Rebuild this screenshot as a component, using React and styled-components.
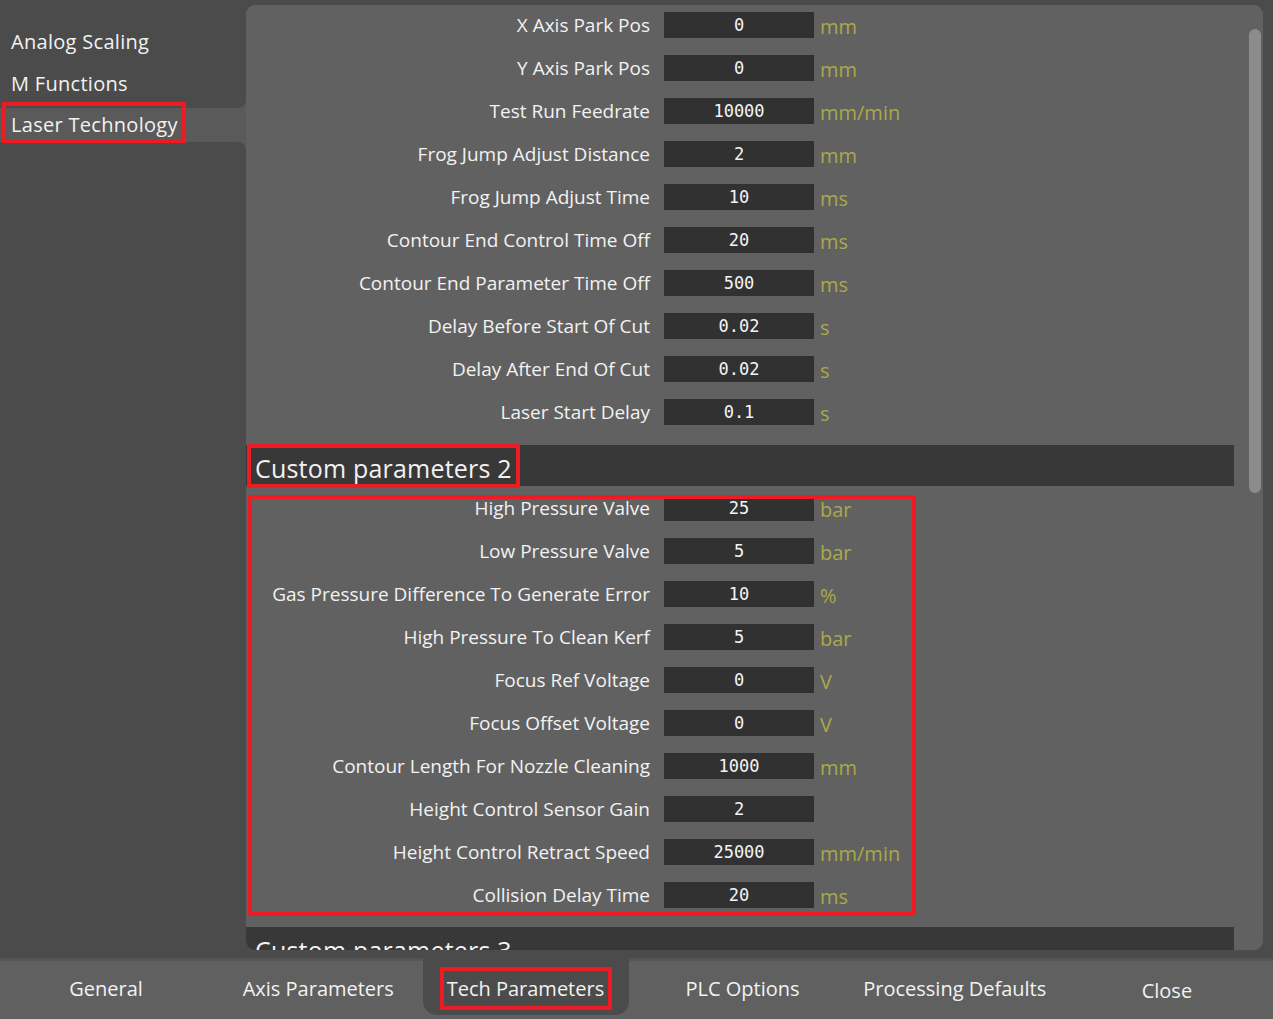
import React from 'react';
import styled, { createGlobalStyle } from 'styled-components';

const GlobalStyle = createGlobalStyle`
  html, body {
    margin: 0;
    padding: 0;
    background: #4b4b4b;
    font-family: "Open Sans", Lato, sans-serif;
    color: #f2f2f2;
  }
`;

const MARK = '#ed1c24';

const topRows = [
    ['X Axis Park Pos', '0', 'mm'],
    ['Y Axis Park Pos', '0', 'mm'],
    ['Test Run Feedrate', '10000', 'mm/min'],
    ['Frog Jump Adjust Distance', '2', 'mm'],
    ['Frog Jump Adjust Time', '10', 'ms'],
    ['Contour End Control Time Off', '20', 'ms'],
    ['Contour End Parameter Time Off', '500', 'ms'],
    ['Delay Before Start Of Cut', '0.02', 's'],
    ['Delay After End Of Cut', '0.02', 's'],
    ['Laser Start Delay', '0.1', 's'],
];

const customRows = [
    ['High Pressure Valve', '25', 'bar'],
    ['Low Pressure Valve', '5', 'bar'],
    ['Gas Pressure Difference To Generate Error', '10', '%'],
    ['High Pressure To Clean Kerf', '5', 'bar'],
    ['Focus Ref Voltage', '0', 'V'],
    ['Focus Offset Voltage', '0', 'V'],
    ['Contour Length For Nozzle Cleaning', '1000', 'mm'],
    ['Height Control Sensor Gain', '2', ''],
    ['Height Control Retract Speed', '25000', 'mm/min'],
    ['Collision Delay Time', '20', 'ms'],
];

const tabs = ['General', 'Axis Parameters', 'Tech Parameters', 'PLC Options', 'Processing Defaults', 'Close'];

function App() {
    return (
        <Screen>
            <GlobalStyle />
            <Main>
                <Sidebar>
                    <SideGroup>
                        <SideItem>Analog Scaling</SideItem>
                        <SideItem>M Functions</SideItem>
                    </SideGroup>
                    <SideSelected>
                        <SideMarked>Laser Technology</SideMarked>
                    </SideSelected>
                    <SideFill />
                </Sidebar>
                <Panel>
                    <Content>
                        {topRows.map(([label, value, unit]) => (
                            <ParamRow key={label}>
                                <ParamLabel>{label}</ParamLabel>
                                <ValueBox>{value}</ValueBox>
                                <Unit>{unit}</Unit>
                            </ParamRow>
                        ))}
                        <SectionBar>
                            <SectionTitle $marked>Custom parameters 2</SectionTitle>
                        </SectionBar>
                        <MarkedGroup>
                            {customRows.map(([label, value, unit]) => (
                                <ParamRow key={label}>
                                    <ParamLabel>{label}</ParamLabel>
                                    <ValueBox>{value}</ValueBox>
                                    <Unit>{unit}</Unit>
                                </ParamRow>
                            ))}
                        </MarkedGroup>
                        <SectionBar $gap={11}>
                            <SectionTitle>Custom parameters 3</SectionTitle>
                        </SectionBar>
                    </Content>
                    <Track>
                        <Thumb />
                    </Track>
                </Panel>
            </Main>
            <BottomBar>
                {tabs.map((t) => (
                    <Tab key={t} $active={t === 'Tech Parameters'} $low={t === 'Close'}>
                        <TabLabel $marked={t === 'Tech Parameters'}>{t}</TabLabel>
                    </Tab>
                ))}
            </BottomBar>
        </Screen>
    );
}

const Screen = styled.div`
  width: 1273px;
  height: 1019px;
  display: flex;
  flex-direction: column;
  overflow: hidden;
  background: #4b4b4b;
`;

const Main = styled.div`
  height: 958px;
  display: flex;
`;

const Sidebar = styled.div`
  width: 246px;
  flex: none;
  display: flex;
  flex-direction: column;
  background: #5a5a5a;
`;

const SideGroup = styled.div`
  background: #4b4b4b;
  border-bottom-right-radius: 8px;
  padding-top: 24px;
`;

const SideItem = styled.div`
  height: 34px;
  margin-bottom: 8px;
  padding-left: 11px;
  display: flex;
  align-items: center;
  font-size: 20px;
  letter-spacing: 0.3px;
  white-space: nowrap;
`;

const SideSelected = styled.div`
  height: 34px;
  display: flex;
  align-items: flex-start;
`;

const SideMarked = styled.span`
  height: 41px;
  box-sizing: border-box;
  margin: -6px 0 0 2px;
  padding: 3px 4px 0 5px;
  border: 4px solid ${MARK};
  display: inline-flex;
  align-items: center;
  font-size: 20px;
  letter-spacing: 0.3px;
  white-space: nowrap;
  position: relative;
  z-index: 1;
`;

const SideFill = styled.div`
  flex: 1;
  background: #4b4b4b;
  border-top-right-radius: 8px;
`;

const Panel = styled.div`
  flex: 1;
  margin: 5px 10px 8px 0;
  background: #616161;
  border-radius: 9px;
  overflow: hidden;
  display: flex;
`;

const Content = styled.div`
  flex: 1;
  overflow: hidden;
  display: flex;
  flex-direction: column;
  margin-top: -2px;
`;

const ParamRow = styled.div`
  height: 43px;
  flex: none;
  display: grid;
  grid-template-columns: 418px 150px auto;
  align-items: center;
`;

const ParamLabel = styled.div`
  text-align: right;
  padding-right: 14px;
  font-size: 19px;
  white-space: nowrap;
`;

const ValueBox = styled.div`
  height: 26px;
  background: #313131;
  display: flex;
  align-items: center;
  justify-content: center;
  font-family: "DejaVu Sans Mono", "Liberation Mono", monospace;
  font-size: 17px;
  color: #f4f4f4;
`;

const Unit = styled.div`
  padding: 3px 0 0 6px;
  font-size: 20px;
  color: #a9a94a;
`;

const SectionBar = styled.div`
  height: 41px;
  flex: none;
  margin-top: ${(p) => p.$gap ?? 12}px;
  background: #383838;
  display: flex;
  align-items: center;
`;

const SectionTitle = styled.span`
  height: ${(p) => (p.$marked ? '44px' : 'auto')};
  box-sizing: border-box;
  margin-left: ${(p) => (p.$marked ? '1px' : '9px')};
  padding: ${(p) => (p.$marked ? '4px 4px 0 4px' : '4px 0 0')};
  border: ${(p) => (p.$marked ? `4px solid ${MARK}` : 'none')};
  display: inline-flex;
  align-items: center;
  font-size: 25px;
  letter-spacing: 0.2px;
  white-space: nowrap;
`;

const MarkedGroup = styled.div`
  position: relative;
  display: flex;
  flex-direction: column;

  &::after {
    content: '';
    position: absolute;
    left: 2px;
    top: 9px;
    width: 668px;
    bottom: 0;
    box-sizing: border-box;
    border: 4px solid ${MARK};
    pointer-events: none;
  }
`;

const Track = styled.div`
  width: 29px;
  flex: none;
  box-sizing: border-box;
  padding: 24px 2px 0 15px;
`;

const Thumb = styled.div`
  height: 464px;
  border-radius: 6px;
  background: #8c8c8c;
`;

const BottomBar = styled.div`
  flex: 1;
  display: grid;
  grid-template-columns: repeat(6, 1fr);
  background: #606060;
  box-shadow: inset 0 3px 0 #555555;
`;

const Tab = styled.div`
  display: flex;
  align-items: center;
  justify-content: center;
  font-size: 20px;
  padding-top: ${(p) => (p.$low ? '4px' : '0')};
  ${(p) =>
    p.$active &&
    `
    background: #4b4b4b;
    margin: 0 8px 4px -1px;
    border-radius: 0 0 14px 14px;
  `}
`;

const TabLabel = styled.span`
  white-space: nowrap;
  ${(p) =>
    p.$marked &&
    `
    box-sizing: border-box;
    height: 43px;
    margin-top: 4px;
    padding: 0 4px 0 3px;
    border: 4px solid ${MARK};
    display: inline-flex;
    align-items: center;
  `}
`;

export default App;
